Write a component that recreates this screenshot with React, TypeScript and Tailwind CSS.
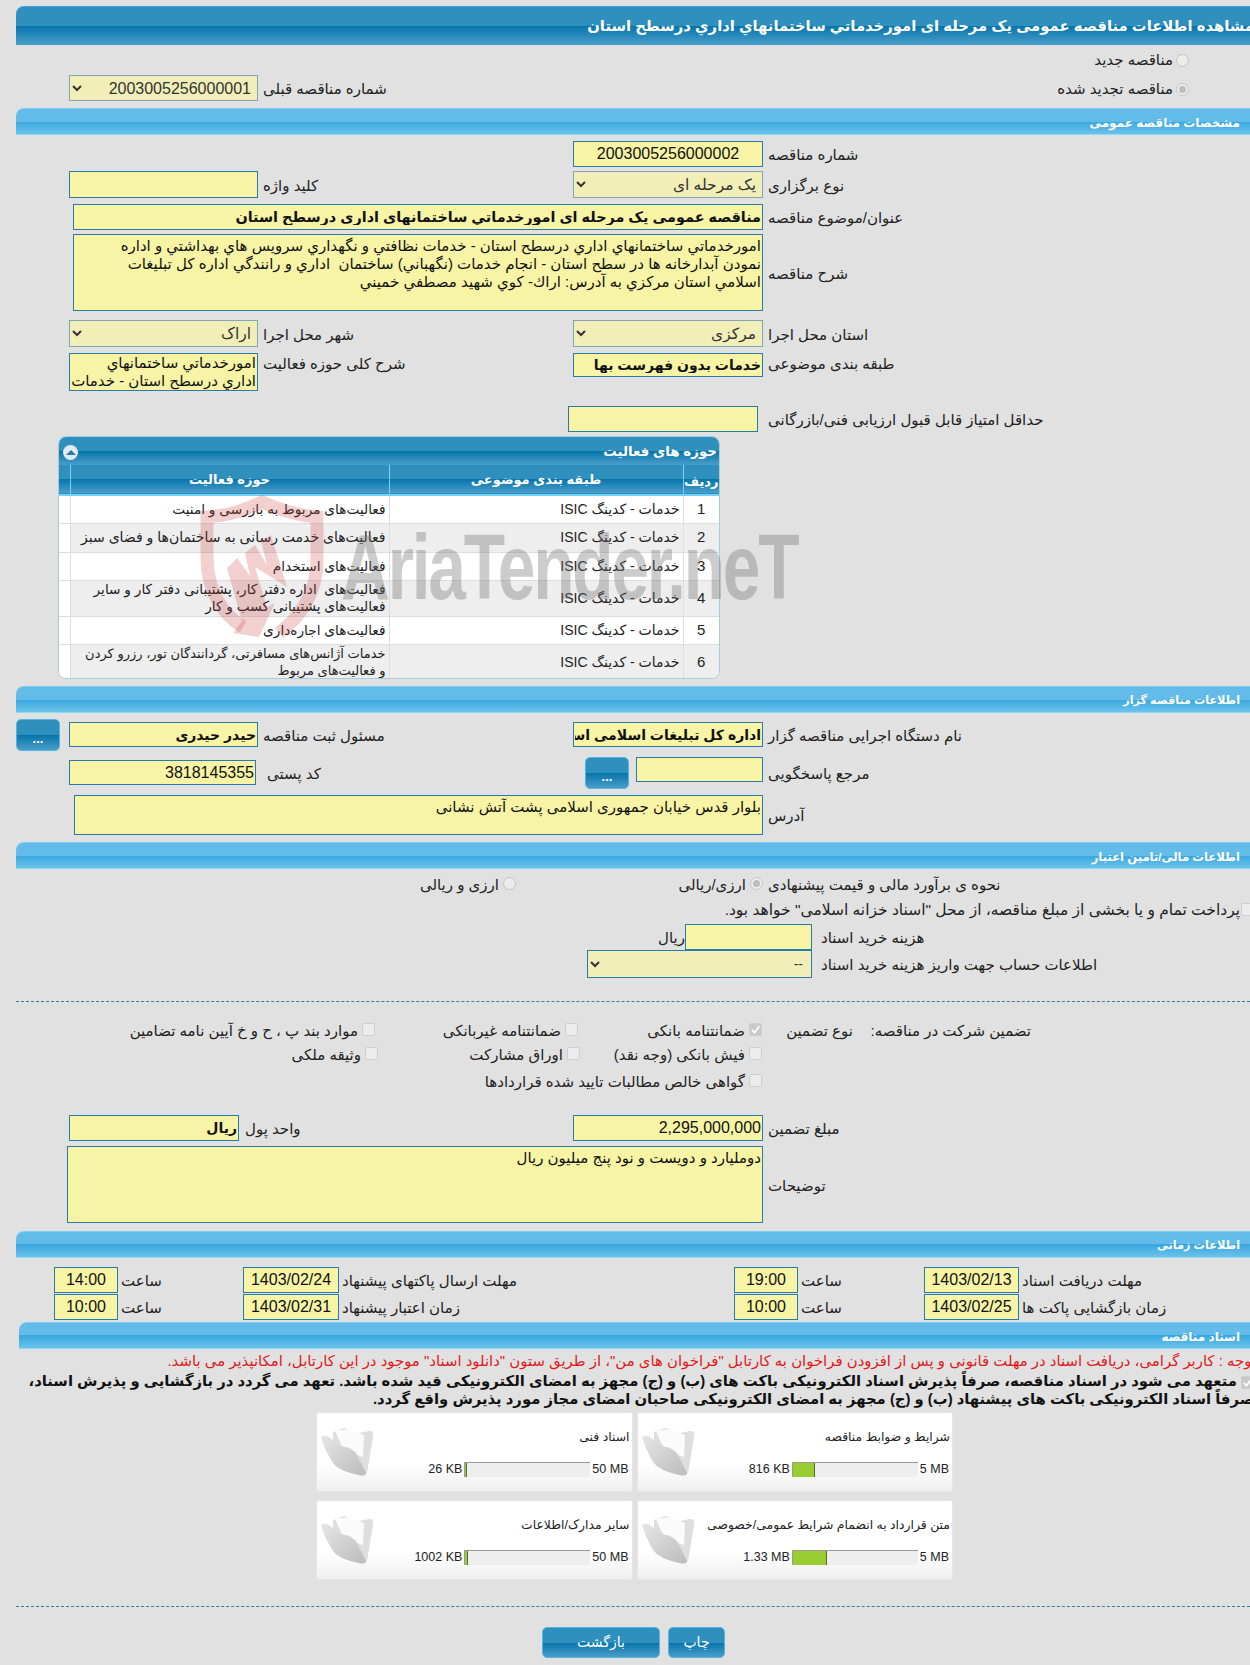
import type { ReactNode } from 'react'

const inputBase =
  'h-full border border-[#2a7bad] bg-[#f7f5a5] px-[1px] text-right text-[#111] outline-none'

const darkBar =
  'bg-[linear-gradient(to_bottom,#2f8fbd_0%,#2f8fbd_50%,#0674ab_50%,#4a9ec9_100%)]'
const lightBar =
  'bg-[linear-gradient(to_bottom,#62bbe9_0%,#62bbe9_50%,#38a7e0_50%,#6cc2ea_100%)]'

const activities = [
  { n: 1, h: 'h-[28px]', size: 'text-[13.7px]', text: 'فعالیت‌های مربوط به بازرسی و امنیت' },
  { n: 2, h: 'h-[29px]', size: 'text-[14px]', text: 'فعالیت‌های خدمت رسانی به ساختمان‌ها و فضای سبز' },
  { n: 3, h: 'h-[28px]', size: 'text-[13.7px]', text: 'فعالیت‌های استخدام' },
  { n: 4, h: 'h-[36px]', size: 'text-[13.7px]', text: 'فعالیت‌های  اداره دفتر کار، پشتیبانی دفتر کار و سایر\nفعالیت‌های پشتیبانی کسب و کار' },
  { n: 5, h: 'h-[28px]', size: 'text-[13.7px]', text: 'فعالیت‌های اجاره‌داری' },
  { n: 6, h: 'h-[36px]', size: 'text-[13px]', text: 'خدمات آژانس‌های مسافرتی، گردانندگان تور، رزرو کردن\nو فعالیت‌های مربوط' },
]

const documents = [
  { title: 'شرایط و ضوابط مناقصه', size: '816 KB', max: '5 MB', fill: 22 },
  { title: 'اسناد فنی', size: '26 KB', max: '50 MB', fill: 2 },
  { title: 'متن قرارداد به انضمام شرایط عمومی/خصوصی', size: '1.33 MB', max: '5 MB', fill: 34 },
  { title: 'سایر مدارک/اطلاعات', size: '1002 KB', max: '50 MB', fill: 3 },
]

function SectionBar({ title, className = '' }: { title: string; className?: string }) {
  return (
    <div
      dir="rtl"
      className={`flex h-[27px] items-center rounded-tl-lg border-t border-b border-t-[#7ccdf2] border-b-[#86def6] pr-[10px] pt-[2px] font-bold text-white ${lightBar} ${className}`}
    >
      {title}
    </div>
  )
}

function Row({ className, children }: { className: string; children: ReactNode }) {
  return <div className={`grid grid-cols-[242px_310px_195px_1fr] ${className}`}>{children}</div>
}

function Label({ children, className = '' }: { children?: ReactNode; className?: string }) {
  return (
    <div className={`flex items-center pl-[5px] pt-[3px] text-[15px] text-[#222] ${className}`}>
      <span dir="rtl" className="whitespace-nowrap">
        {children}
      </span>
    </div>
  )
}

function TextBox({ value = '', className = '' }: { value?: string; className?: string }) {
  return <input dir="rtl" readOnly value={value} className={`${inputBase} ${className}`} />
}

function TextArea({ value = '', className = '' }: { value?: string; className?: string }) {
  return (
    <textarea
      dir="rtl"
      readOnly
      value={value}
      className={`${inputBase} resize-none overflow-hidden pt-[2px] text-[15px] leading-[18px] ${className}`}
    />
  )
}

function Dropdown({ value, className = '' }: { value: string; className?: string }) {
  return (
    <select
      dir="rtl"
      disabled
      value={value}
      onChange={() => undefined}
      className={`h-full border border-[#7fa5b8] bg-[#f1efb7] pr-[2px] text-[#333] opacity-100 ${className}`}
    >
      <option>{value}</option>
    </select>
  )
}

function Radio({ checked = false }: { checked?: boolean }) {
  return (
    <span className="flex h-[13px] w-[13px] shrink-0 items-center justify-center rounded-full border border-[#c4c4c4] bg-[#ececec]">
      {checked && <span className="h-[7px] w-[7px] rounded-full bg-[#bdbdbd]" />}
    </span>
  )
}

function Check({ checked = false }: { checked?: boolean }) {
  return (
    <span
      className={`inline-flex h-[13px] w-[13px] shrink-0 items-center justify-center rounded-[2px] border border-[#cfcfcf] align-middle ${checked ? 'bg-[#c9c9c9]' : 'bg-[#ececec]'}`}
    >
      {checked && (
        <svg viewBox="0 0 12 12" className="h-[11px] w-[11px]">
          <path d="M2 6.5 L5 9.5 L10 2.5" fill="none" stroke="#fff" strokeWidth="2" />
        </svg>
      )}
    </span>
  )
}

function DotsButton() {
  return (
    <button
      className={`flex h-full w-[44px] items-end justify-center rounded-[5px] border border-[#50b4e4] pb-[5px] text-[13px] font-bold leading-none text-white ${darkBar}`}
    >
      ...
    </button>
  )
}

function CheckItem({ label, width, checked }: { label: string; width: string; checked?: boolean }) {
  return (
    <div className={`flex items-center gap-[4px] ${width}`}>
      <Check checked={checked} />
      <span className="whitespace-nowrap pt-[4px]">{label}</span>
    </div>
  )
}

function FolderIcon() {
  return (
    <svg viewBox="0 0 54 50" className="h-[50px] w-[54px] shrink-0 blur-[0.4px]">
      <defs>
        <linearGradient id="flap" x1="0" y1="0" x2="1" y2="1">
          <stop offset="0" stopColor="#e6e6e6" />
          <stop offset="1" stopColor="#bcbcbc" />
        </linearGradient>
      </defs>
      <path d="M13 5 L24 1 C27 1 30 4 34 7 L49 4 C53 4 54 6 53 10 L47 46 L40 45 L13 16 Z" fill="#dedede" />
      <path d="M15 4 L28 2 L44 8 L43 30 L24 24 Z" fill="#fbfbfb" />
      <path
        d="M1 10 C3 8 6 8 9 10 C14 14 20 20 26 20 C32 22 37 26 38 30 L46 46 C46 49 42 49 38 48 C28 46 16 41 13 36 C8 28 3 18 1 10 Z"
        fill="url(#flap)"
      />
    </svg>
  )
}

function DocumentCard({ title, size, max, fill }: (typeof documents)[number]) {
  return (
    <div
      dir="ltr"
      className="flex h-[80px] items-end rounded-[2px] border border-[#e6e6e6] bg-[linear-gradient(to_bottom,#ffffff_0%,#ffffff_65%,#efefef_100%)] pb-[14px] pl-[3px] pr-[3px]"
    >
      <FolderIcon />
      <div className="flex flex-1 flex-col items-end gap-[15px] text-[#222]">
        <div dir="rtl" className="-mr-[1px] whitespace-nowrap text-[12.4px]">
          {title}
        </div>
        <div className="flex h-[15px] items-center gap-[2px] text-[12.5px]">
          <span className="whitespace-nowrap">{size}</span>
          <div className="h-[15px] w-[126px] border-t border-l border-t-[#999] border-l-[#999] bg-[#eeeeee]">
            <div className="h-full border-r border-r-[#556b2f] bg-[#9acd32]" style={{ width: fill }} />
          </div>
          <span className="whitespace-nowrap">{max}</span>
        </div>
      </div>
    </div>
  )
}

function TimeRow({ className, cells }: { className: string; cells: string[] }) {
  return (
    <div className={`grid h-[24px] grid-cols-[102px_125px_96px_395px_64px_126px_95px_1fr] ${className}`}>
      <div className="flex justify-end">
        <TextBox value={cells[0]} className="w-[64px] !text-center text-[16px]" />
      </div>
      <Label className="!pl-[3px]">ساعت</Label>
      <TextBox value={cells[1]} className="w-full !text-center text-[16px]" />
      <Label className="!pl-[3px]">{cells[2]}</Label>
      <TextBox value={cells[3]} className="w-full !text-center text-[16px]" />
      <Label className="!pl-[3px]">ساعت</Label>
      <TextBox value={cells[4]} className="w-full !text-center text-[16px]" />
      <Label className="!pl-[3px]">{cells[5]}</Label>
    </div>
  )
}

function Watermark() {
  return (
    <div className="pointer-events-none absolute left-[195px] top-[495px] h-[150px] w-[620px]">
      <svg viewBox="0 0 135 150" className="absolute left-0 top-0 h-[150px] w-[135px]">
        <path
          d="M48 132 C25 118 12 92 12 62 L12 22 C38 20 52 14 67 7 C82 14 100 20 122 22 L122 66 C122 96 106 122 84 138"
          fill="none"
          stroke="#c83c3c"
          strokeOpacity="0.24"
          strokeWidth="13"
        />
        <path
          d="M32 73 L42 63 L55 81 L50 58 L60 50 L72 70 L66 46 L76 40 L92 92 L60 72 L72 112 L80 108 L64 142 L38 138 L47 126 Z"
          fill="#c83c3c"
          fillOpacity="0.24"
        />
      </svg>
      <div className="absolute left-[146px] top-[26px] origin-left scale-x-[0.735] whitespace-nowrap text-[92px] font-bold leading-none tracking-[-3px] text-[#6f6f6f] opacity-35">
        AriaTender.neT
      </div>
    </div>
  )
}

export default function App() {
  return (
    <div className="relative h-[1665px] w-[1250px] overflow-hidden bg-[#e1e1e1] pl-4 pt-[6px] [font-family:'Liberation_Sans','DejaVu_Sans',sans-serif]">
      <div
        dir="rtl"
        className={`flex h-[39px] items-center justify-start overflow-hidden whitespace-nowrap rounded-tl-lg border-t border-t-[#3aa0e4] text-[14.8px] font-bold text-white ${darkBar}`}
      >
        <span className="-mr-[4px]">مشاهده اطلاعات مناقصه عمومی یک مرحله ای امورخدماتي ساختمانهاي اداري درسطح استان</span>
      </div>

      <div dir="rtl" className="flex h-[30px] items-center gap-[3px] pr-[61px] pt-[1px] text-[15px] text-[#222]">
        <Radio />
        <span>مناقصه جدید</span>
      </div>
      <Row className="h-[26px]">
        <div className="flex justify-end">
          <Dropdown value="2003005256000001" className="w-[189px] text-[16px]" />
        </div>
        <Label>شماره مناقصه قبلی</Label>
        <div />
        <div dir="rtl" className="flex items-center gap-[3px] pr-[61px] pt-[2px] text-[15px] text-[#222]">
          <Radio checked />
          <span>مناقصه تجدید شده</span>
        </div>
      </Row>

      <SectionBar title="مشخصات مناقصه عمومی" className="mt-[7px] text-[12px]" />

      <Row className="mt-[6px] h-[24px]">
        <div />
        <div />
        <div className="flex justify-end">
          <TextBox value="2003005256000002" className="w-[190px] !text-center text-[16px]" />
        </div>
        <Label>شماره مناقصه</Label>
      </Row>
      <Row className="mt-[6px] h-[27px]">
        <div className="flex justify-end">
          <TextBox className="w-[189px]" />
        </div>
        <Label>کلید واژه</Label>
        <div className="flex justify-end">
          <Dropdown value="یک مرحله ای" className="w-[190px] text-[15.5px]" />
        </div>
        <Label>نوع برگزاری</Label>
      </Row>
      <div className="mt-[6px] grid h-[24px] grid-cols-[747px_1fr]">
        <div className="flex justify-end">
          <TextBox
            value="مناقصه عمومی یک مرحله ای امورخدماتي ساختمانهاي اداري درسطح استان"
            className="w-[690px] text-[14.4px] font-bold"
          />
        </div>
        <Label>عنوان/موضوع مناقصه</Label>
      </div>
      <div className="mt-[6px] grid h-[77px] grid-cols-[747px_1fr]">
        <div className="flex justify-end">
          <TextArea
            value={'امورخدماتي ساختمانهاي اداري درسطح استان - خدمات نظافتي و نگهداري سرويس هاي بهداشتي و اداره\nنمودن آبدارخانه ها در سطح استان - انجام خدمات (نگهباني) ساختمان  اداري و رانندگي اداره كل تبليغات\nاسلامي استان مركزي به آدرس: اراك- كوي شهيد مصطفي خميني'}
            className="w-[690px]"
          />
        </div>
        <Label>شرح مناقصه</Label>
      </div>
      <Row className="mt-[9px] h-[27px]">
        <div className="flex justify-end">
          <Dropdown value="اراک" className="w-[189px] text-[15.5px]" />
        </div>
        <Label>شهر محل اجرا</Label>
        <div className="flex justify-end">
          <Dropdown value="مرکزی" className="w-[190px] text-[15.5px]" />
        </div>
        <Label>استان محل اجرا</Label>
      </Row>
      <Row className="mt-[6px] h-[38px]">
        <div className="flex justify-end">
          <TextArea value="امورخدماتي ساختمانهاي اداري درسطح استان - خدمات" className="w-[189px] !pt-0" />
        </div>
        <Label className="!items-start !pt-0">شرح کلی حوزه فعالیت</Label>
        <div className="flex h-[24px] justify-end">
          <TextBox value="خدمات بدون فهرست بها" className="w-[190px] text-[14px] font-bold" />
        </div>
        <Label className="!items-start !pt-0">طبقه بندی موضوعی</Label>
      </Row>
      <div className="mt-[15px] grid h-[24px] grid-cols-[742px_1fr]">
        <div className="flex justify-end">
          <TextBox className="w-[190px]" />
        </div>
        <Label className="!pl-[10px]">حداقل امتیاز قابل قبول ارزیابی فنی/بازرگانی</Label>
      </div>

      <div className="ml-[42px] mt-[6px] h-[243px] w-[662px] overflow-hidden rounded-lg border border-[#a5cde0] bg-white">
        <div dir="rtl" className={`flex h-[28px] items-center justify-between pr-[2px] pt-[2px] text-[13.4px] font-bold text-white ${darkBar}`}>
          <span>حوزه های فعالیت</span>
          <span className="ml-[4px] flex h-[15px] w-[15px] items-center justify-center rounded-full bg-[#e4eaf2]">
            <span className="h-0 w-0 border-x-[5px] border-b-[5px] border-x-transparent border-b-[#2a7bad]" />
          </span>
        </div>
        <table dir="rtl" className="w-full table-fixed border-collapse text-[#222]">
          <colgroup>
            <col className="w-[36px]" />
            <col className="w-[294px]" />
            <col className="w-[319px]" />
            <col />
          </colgroup>
          <thead>
            <tr className={`h-[30px] border-b-2 border-b-[#6fd4f5] font-bold text-white ${darkBar}`}>
              <th className="border-l border-l-[#7fd0f0] pt-[4px] text-[13px]">ردیف</th>
              <th className="border-l border-l-[#7fd0f0] text-[13px]">طبقه بندی موضوعی</th>
              <th className="border-l border-l-[#7fd0f0] text-[13px]">حوزه فعالیت</th>
              <th />
            </tr>
          </thead>
          <tbody>
            {activities.map((row) => (
              <tr key={row.n} className={`${row.h} ${row.n % 2 === 0 ? 'bg-[#eeeeee]' : 'bg-white'} border-b border-b-[#dddddd]`}>
                <td className="border-l border-l-[#dddddd] text-center text-[15px]">{row.n}</td>
                <td className="border-l border-l-[#dddddd] pr-[3px] text-right text-[14px]">خدمات - کدینگ ISIC</td>
                <td className={`whitespace-pre border-l border-l-[#dddddd] pr-[3px] text-right leading-[17px] ${row.size}`}>{row.text}</td>
                <td className="bg-white" />
              </tr>
            ))}
          </tbody>
        </table>
      </div>

      <SectionBar title="اطلاعات مناقصه گزار" className="mt-[7px] text-[11.2px]" />

      <Row className="mt-[6px] h-[32px]">
        <div className="flex items-start justify-between">
          <DotsButton />
          <div className="mt-[3px] h-[25px]">
            <TextBox value="حیدر حیدری" className="w-[189px] text-[14px] font-bold" />
          </div>
        </div>
        <Label className="!items-start !pt-[6px]">مسئول ثبت مناقصه</Label>
        <div className="flex justify-end pt-[3px]">
          <div className="h-[25px]">
            <TextBox value="اداره کل تبلیغات اسلامی استان مرکزی" className="w-[190px] text-[14px] font-bold" />
          </div>
        </div>
        <Label className="!items-start !pt-[6px]">نام دستگاه اجرایی مناقصه گزار</Label>
      </Row>
      <Row className="mt-[6px] h-[32px]">
        <div className="flex justify-end pt-[3px]">
          <div className="h-[25px]">
            <TextBox value="3818145355" className="mr-[2px] w-[187px] text-[16px]" />
          </div>
        </div>
        <Label className="!items-start !pl-[9px] !pt-[6px]">کد پستی</Label>
        <div className="flex items-start justify-between pl-[17px]">
          <DotsButton />
          <div className="h-[25px]">
            <TextBox className="w-[127px]" />
          </div>
        </div>
        <Label className="!items-start !pt-[6px]">مرجع پاسخگویی</Label>
      </Row>
      <div className="mt-[6px] grid h-[37px] grid-cols-[747px_1fr]">
        <div className="flex justify-end">
          <TextArea value="بلوار قدس خیابان جمهوری اسلامی پشت آتش نشانی" className="w-[689px]" />
        </div>
        <Label>آدرس</Label>
      </div>

      <SectionBar title="اطلاعات مالی/تامین اعتبار" className="mt-[10px] text-[11.6px]" />

      <div className="mt-[2px] grid h-[20px] grid-cols-[747px_1fr]">
        <div dir="rtl" className="flex items-center text-[15px] text-[#222]">
          <div className="flex w-[247px] items-center gap-[4px]">
            <Radio checked />
            <span className="pt-[3px]">ارزی/ریالی</span>
          </div>
          <div className="flex items-center gap-[4px]">
            <Radio />
            <span className="pt-[3px]">ارزی و ریالی</span>
          </div>
        </div>
        <Label>نحوه ی برآورد مالی و قیمت پیشنهادی</Label>
      </div>
      <div dir="rtl" className="-mr-[4px] mt-[9px] flex h-[18px] items-center gap-[1px] text-[15.5px] text-[#222]">
        <Check />
        <span className="pt-[2px]">پرداخت تمام و یا بخشی از مبلغ مناقصه، از محل "اسناد خزانه اسلامی" خواهد بود.</span>
      </div>
      <div className="mt-[6px] grid h-[24px] grid-cols-[796px_1fr]">
        <div className="flex justify-end gap-[0px]">
          <span dir="rtl" className="flex items-center pt-[3px] text-[15px] text-[#222]">
            ریال
          </span>
          <TextBox className="w-[127px]" />
        </div>
        <Label className="!pl-[9px]">هزینه خرید اسناد</Label>
      </div>
      <div className="mt-[2px] grid h-[28px] grid-cols-[796px_1fr]">
        <div className="flex justify-end">
          <Dropdown value="--" className="w-[225px] !border-[#2a7bad] pr-[4px] text-[14px]" />
        </div>
        <Label className="!pl-[9px]">اطلاعات حساب جهت واریز هزینه خرید اسناد</Label>
      </div>

      <div className="mt-[23px] border-t border-dashed border-t-[#2e7ea6]" />

      <div dir="rtl" className="mt-[16px] flex h-[22px] items-center pr-[219px] text-[15px] text-[#222]">
        <span className="w-[178px] whitespace-nowrap pt-[4px]">تضمین شرکت در مناقصه:</span>
        <span className="w-[91px] whitespace-nowrap pt-[4px]">نوع تضمین</span>
        <CheckItem label="ضمانتنامه بانکی" width="w-[184px]" checked />
        <CheckItem label="ضمانتنامه غیربانکی" width="w-[203px]" />
        <CheckItem label="موارد بند پ ، ح و خ آیین نامه تضامین" width="" />
      </div>
      <div dir="rtl" className="mt-[2px] flex h-[22px] items-center pr-[488px] text-[15px] text-[#222]">
        <CheckItem label="فیش بانکی (وجه نقد)" width="w-[182px]" />
        <CheckItem label="اوراق مشارکت" width="w-[202px]" />
        <CheckItem label="وثیقه ملکی" width="" />
      </div>
      <div dir="rtl" className="mt-[5px] flex h-[22px] items-center pr-[488px] text-[15px] text-[#222]">
        <CheckItem label="گواهی خالص مطالبات تایید شده قراردادها" width="" />
      </div>

      <Row className="mt-[24px] h-[24px]">
        <div className="flex justify-start pl-[53px]">
          <TextBox value="ریال" className="w-[170px] text-[14px] font-bold" />
        </div>
        <Label className="!-ml-[18px]">واحد پول</Label>
        <div className="flex justify-end">
          <TextBox value="2,295,000,000" className="w-[190px] text-[16px]" />
        </div>
        <Label>مبلغ تضمین</Label>
      </Row>
      <div className="mt-[7px] grid h-[77px] grid-cols-[747px_1fr]">
        <div className="flex justify-end">
          <TextArea value="دوملیارد و دویست و نود پنج میلیون ریال" className="w-[696px]" />
        </div>
        <Label>توضیحات</Label>
      </div>

      <SectionBar title="اطلاعات زمانی" className="mt-[8px] text-[11.3px]" />

      <TimeRow className="mt-[9px]" cells={['14:00', '1403/02/24', 'مهلت ارسال پاکتهای پیشنهاد', '19:00', '1403/02/13', 'مهلت دریافت اسناد']} />
      <TimeRow className="mt-[3px]" cells={['10:00', '1403/02/31', 'زمان اعتبار پیشنهاد', '10:00', '1403/02/25', 'زمان بازگشایی پاکت ها']} />

      <SectionBar title="اسناد مناقصه" className="ml-[3px] mt-[4px] text-[12px]" />

      <div dir="rtl" className="-mr-[6px] mt-[3px] whitespace-nowrap text-[14.9px] leading-[18px] text-[#e01a1a]">
        توجه : کاربر گرامی، دریافت اسناد در مهلت قانونی و پس از افزودن فراخوان به کارتابل "فراخوان های من"، از طریق ستون "دانلود اسناد" موجود در این کارتابل، امکانپذیر می باشد.
      </div>
      <div dir="rtl" className="-mr-[4px] mt-[2px] whitespace-nowrap text-[14.8px] font-bold leading-[18px] text-[#111]">
        <Check checked /> متعهد می شود در اسناد مناقصه، صرفاً پذیرش اسناد الکترونیکی باکت های (ب) و (ج) مجهز به امضای الکترونیکی قید شده باشد. تعهد می گردد در بازگشایی و پذیرش اسناد،
        <br />
        صرفاً اسناد الکترونیکی باکت های پیشنهاد (ب) و (ج) مجهز به امضای الکترونیکی صاحبان امضای مجاز مورد پذیرش واقع گردد.
      </div>

      <div dir="rtl" className="ml-[300px] mt-[4px] grid w-[637px] grid-cols-2 gap-x-[4px] gap-y-[8px]">
        {documents.map((doc) => (
          <DocumentCard key={doc.title} {...doc} />
        ))}
      </div>

      <div className="mt-[26px] border-t border-dashed border-t-[#2e7ea6]" />

      <div className="ml-[526px] mt-[20px] flex gap-[8px] text-[14px] text-white">
        <button className={`h-[31px] w-[118px] rounded-[5px] border border-[#50b4e4] ${darkBar}`}>بازگشت</button>
        <button className={`h-[31px] w-[57px] rounded-[5px] border border-[#50b4e4] ${darkBar}`}>چاپ</button>
      </div>

      <Watermark />
    </div>
  )
}
